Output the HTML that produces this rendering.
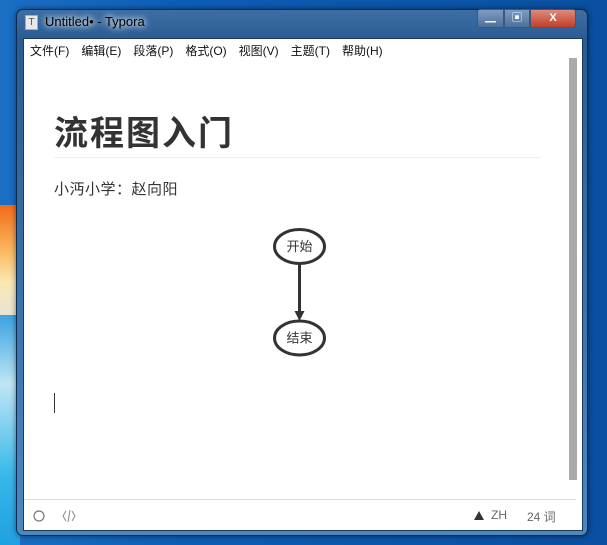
<!DOCTYPE html>
<html><head><meta charset="utf-8"><style>
*{margin:0;padding:0;box-sizing:border-box}
body{width:607px;height:545px;overflow:hidden;position:relative;background:linear-gradient(90deg,#1a6fc4 0,#0d5db5 30%,#0a4fa0 100%);font-family:"Liberation Sans","Noto Sans CJK SC",sans-serif}
.streak{position:absolute;left:0;top:205px;width:20px;height:110px;background:linear-gradient(180deg,#f26a1b,#f9b65c 40%,#fbe7b2 70%,#e8e4d5)}
.streak2{position:absolute;left:0;top:315px;width:20px;height:230px;background:linear-gradient(180deg,#3aa2e0,#bfe6f5 30%,#38b7ea 70%,#1fa0e0)}
.frame{position:absolute;left:16px;top:9px;width:572px;height:527px;border-radius:7px;border:1px solid #0e2a4c;background:linear-gradient(180deg,#3d6ea4 0,#2a5c93 30px,#4a88c2 100%);box-shadow:0 0 6px rgba(0,0,0,.5)}
.client{position:absolute;left:23px;top:38px;width:560px;height:493px;background:#fff;border:1px solid #1d3a5c}
.title{position:absolute;left:45px;top:14px;color:#000;font-size:13px;text-shadow:0 0 8px #fff,0 0 6px #fff}
.ticon{position:absolute;left:25px;top:15px;width:13px;height:15px;background:#e8e8e8;border:1px solid #aaa;font-size:10px;color:#555;text-align:center;line-height:13px}
.btns{position:absolute;left:477px;top:9px;height:20px;display:flex}
.b{height:19px;border:1px solid #3c5778;background:linear-gradient(#7f9dc2,#4c6f9c);color:#fff;font-size:11px;text-align:center;line-height:17px}
.menu{position:absolute;left:30px;top:42px;font-size:12px;color:#111;white-space:nowrap}
.menu span{margin-right:12px}
.sb{position:absolute;left:569px;top:58px;width:8px;height:422px;background:#aaa}
h1{position:absolute;left:54px;top:106px;font-size:34px;font-weight:bold;color:#333;letter-spacing:2px}
.hr{position:absolute;left:54px;top:157px;width:487px;height:1px;background:#eee}
.p{position:absolute;left:54px;top:178px;font-size:15px;color:#333;letter-spacing:0.5px}
.cursor{position:absolute;left:54px;top:393px;width:1px;height:20px;background:#333}
.status{position:absolute;left:24px;top:499px;width:552px;height:1px;background:#ddd}
.st{position:absolute;top:508px;font-size:12px;color:#666}
</style></head><body>
<div class="streak"></div><div class="streak2"></div>
<div class="frame"></div>
<div class="ticon">T</div>
<div class="title">Untitled• - Typora</div>
<div class="btns">
<div class="b" style="width:27px;border-radius:3px 0 0 3px">▁</div>
<div class="b" style="width:26px">▣</div>
<div class="b" style="width:46px;background:linear-gradient(#e08a7a,#c0402a);border-radius:0 3px 3px 0;font-weight:bold">X</div>
</div>
<div class="client"></div>
<div class="menu"><span>文件(F)</span><span>编辑(E)</span><span>段落(P)</span><span>格式(O)</span><span>视图(V)</span><span>主题(T)</span><span>帮助(H)</span></div>
<div class="sb"></div>
<h1>流程图入门</h1>
<div class="hr"></div>
<div class="p">小沔小学<span style="font-family:'Noto Sans CJK SC',sans-serif">：</span>赵向阳</div>
<svg style="position:absolute;left:0;top:0" width="607" height="545">
<ellipse cx="299.5" cy="246.5" rx="25" ry="17" fill="#fff" stroke="#333" stroke-width="3"/>
<text x="299.5" y="251" font-size="13" text-anchor="middle" fill="#333" font-family="Noto Sans CJK SC,sans-serif">开始</text>
<line x1="299.5" y1="264" x2="299.5" y2="312" stroke="#333" stroke-width="3"/>
<polygon points="294.5,311 304.5,311 299.5,321" fill="#333"/>
<ellipse cx="299.5" cy="338" rx="25" ry="17" fill="#fff" stroke="#333" stroke-width="3"/>
<text x="299.5" y="342.5" font-size="13" text-anchor="middle" fill="#333" font-family="Noto Sans CJK SC,sans-serif">结束</text>
<circle cx="39" cy="516" r="5" fill="none" stroke="#777" stroke-width="1.2"/>
<path d="M66 511l-3 5 3 5M72 511l3 5-3 5M70 510l-2 12" fill="none" stroke="#888" stroke-width="1"/>
<polygon points="474,520 479,511 484,520" fill="#333"/>
</svg>
<div class="st" style="left:491px">ZH</div>
<div class="st" style="left:527px">24 词</div>
<div class="cursor"></div>
<div class="status"></div>
</body></html>
